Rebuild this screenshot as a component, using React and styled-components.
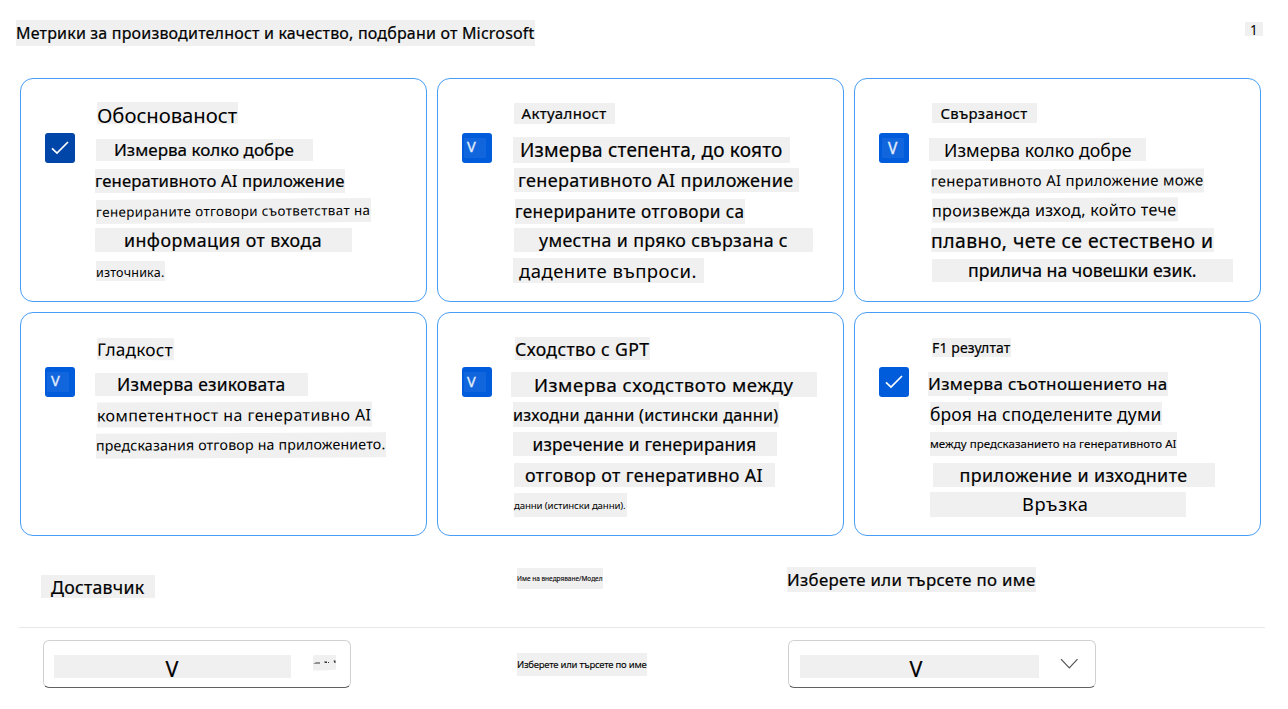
import React, { useLayoutEffect, useRef, useState } from "react";
import styled, { createGlobalStyle } from "styled-components";

const Global = createGlobalStyle`
  * { box-sizing: border-box; }
  body { margin: 0; background: #fff; color: #000; font-family: "Noto Sans", "Open Sans", sans-serif; }
`;

const Page = styled.main`
  width: 1288px;
  height: 709px;
  overflow: hidden;
  display: flex;
  flex-direction: column;
`;

const Header = styled.header`
  display: flex;
  justify-content: space-between;
  align-items: flex-start;
  height: 78px;
  padding: 20px 25px 0 16px;
`;

const Grid = styled.section`
  display: grid;
  grid-template-columns: repeat(3, 407px);
  grid-auto-rows: 224px;
  gap: 10px;
  padding-left: 20px;
`;

const Card = styled.article`
  display: flex;
  align-items: flex-start;
  gap: 19px;
  padding: 23px 0 0 24px;
  border: 1px solid #479ef5;
  border-radius: 13px;
`;

const CheckBox = styled.span`
  flex: none;
  display: flex;
  width: 30px;
  height: 30px;
  margin-top: 31px;
  border-radius: 3px;
  background: ${(p) => (p.$dark ? "#0046a8" : "#005cdb")};
  color: #fff;
`;

const CheckPatch = styled.span`
  width: 22px;
  height: 20px;
  margin: ${(p) => p.$top}px 0 0 ${(p) => p.$left}px;
  padding-left: ${(p) => p.$inset}px;
  background: #1166de;
  color: #e4eefb;
  -webkit-text-stroke: 0.3px #e4eefb;
  font-size: ${(p) => p.$size}px;
  line-height: ${(p) => p.$line}px;
`;

const Body = styled.div`
  flex: 1;
  min-width: 0;
`;

const Strip = styled.div`
  flex: none;
  width: ${(p) => p.$w}px;
  height: ${(p) => p.$h}px;
  margin: ${(p) => p.$gap || 0}px 0 0 ${(p) => p.$x || 0}px;
  padding-left: ${(p) => (p.$inset ? p.$inset + 0.5 : 0)}px;
  background: #f0f0f0;
  white-space: nowrap;
  font-size: ${(p) => p.$size}px;
  line-height: ${(p) => 2 * (p.$base + 0.5 - 0.388 * p.$size)}px;
  -webkit-text-stroke: ${(p) => (p.$light ? 0 : p.$size > 12 ? 0.2 : 0.1)}px #000;
  transform: ${(p) => (p.$tilt ? `rotate(${p.$tilt}deg)` : "none")};
`;

const Label = styled.span`
  display: inline-block;
  line-height: inherit;
  vertical-align: top;
`;

/* Tracks its text so that the run fills the given width. */
function Line({ text, fit, ...strip }) {
  const ref = useRef(null);
  const [spacing, setSpacing] = useState(0);
  useLayoutEffect(() => {
    if (fit) setSpacing((fit - 0.5 - ref.current.getBoundingClientRect().width) / text.length);
  }, [fit, text]);
  return (
    <Strip {...strip}>
      <Label ref={ref} style={{ letterSpacing: spacing }}>{text}</Label>
    </Strip>
  );
}

const line = (text, $gap, $x, $w, $h, $inset, fit, $size, $base, $tilt, $light) => ({
  text, $gap, $x, $w, $h, $inset, fit, $size, $base, $tilt, $light,
});

const cards = [
  {
    check: "dark",
    lines: [
      line("Обоснованост", 0, 3, 141, 22, 0, 140.5, 20.3, 21, 0, true),
      line("Измерва колко добре", 15, 2, 217, 22, 17.5, 180.5, 17, 17),
      line("генеративното AI приложение", 8, 1, 250, 24, 0, 250, 16.7, 18),
      line("генерираните отговори съответстват на", 6, 2, 275, 24, 0, 275, 13.4, 17.5, -0.4, true),
      line("информация от входа", 5, 1, 257, 24, 28.5, 198.5, 17.8, 18.5),
      line("източника.", 9, 2, 69, 20, 0, 69, 12.5, 16, 0, true),
    ],
  },
  {
    check: { $top: 5, $left: 2, $inset: 3, $size: 14.5, $line: 17 },
    lines: [
      line("Актуалност", 1, 3, 101, 21, 7, 85.5, 15, 15.5),
      line("Измерва степента, до която", 13, 2, 277, 26, 6.5, 263, 19, 20.3),
      line("генеративното AI приложение", 5, 3, 285, 24, 3.5, 276, 18, 18.5),
      line("генерираните отговори са", 7, 4, 230, 25, 0, 230, 17.2, 19),
      line("уместна и пряко свързана с", 4, 3, 299, 24, 24.5, 249.5, 17.8, 18.5),
      line("дадените въпроси.", 6, 2, 191, 25, 5.5, 178.5, 18.5, 19.5, 0, true),
    ],
  },
  {
    check: { $top: 5, $left: 3, $inset: 6, $size: 15.5, $line: 21 },
    lines: [
      line("Свързаност", 1, 4, 105, 20, 8, 87.5, 14.9, 15.5),
      line("Измерва колко добре", 15, 1, 217, 23, 14.5, 188, 17.7, 18.5, 0, true),
      line("генеративното AI приложение може", 7.5, 3, 273, 24, 0, 273, 14.9, 17.2, -0.25, true),
      line("произвежда изход, който тече", 5.5, 4, 246, 24, 0, 245, 16.2, 18.5, -0.3, true),
      line("плавно, чете се естествено и", 6, 3, 283, 24, 0, 283, 19.4, 20.5),
      line("прилича на човешки език.", 7, 4, 301, 23, 35.5, 229, 17.7, 18),
    ],
  },
  {
    check: { $top: 5, $left: 2, $inset: 4, $size: 14.5, $line: 17 },
    lines: [
      line("Гладкост", 2, 3, 77, 22, 0, 76.5, 17.2, 18.5, 0.5, true),
      line("Измерва езиковата", 13, 1, 213, 23, 21.5, 169, 17.5, 18),
      line("компетентност на генеративно AI", 6, 3, 275, 25, 0, 275, 16, 18.8, -0.2, true),
      line("предсказания отговор на приложението.", 6, 2, 290, 25, 0, 290, 14.2, 17.5, -0.3, true),
    ],
  },
  {
    check: { $top: 5, $left: 2, $inset: 3, $size: 14.5, $line: 19 },
    lines: [
      line("Сходство с GPT", 1, 4, 135, 23, 0, 135, 17.6, 19),
      line("Измерва сходството между", 12, 0, 306, 25, 22.5, 260, 18.6, 19.8),
      line("изходни данни (истински данни)", 5, 2, 266, 25, 0, 266, 16.2, 19),
      line("изречение и генерирания", 5, 2, 264, 24, 19, 224.5, 17.3, 19.3),
      line("отговор от генеративно AI", 7, 3, 261, 24, 10.5, 238.5, 17.9, 18.5),
      line("данни (истински данни).", 6, 3, 113, 24, 0, 112, 9.7, 16, 0, true),
    ],
  },
  {
    check: "plain",
    lines: [
      line("F1 резултат", 2, 4, 79, 19, 0, 79, 14, 14.5),
      line("Измерва съотношението на", 15, 0, 240, 24, 0, 240, 17, 18),
      line("броя на споделените думи", 6, 2, 232, 23, 0, 232, 17.5, 18.5, 0, true),
      line("между предсказанието на генеративното AI", 7, 2, 247, 24, 0, 247, 11.5, 16),
      line("приложение и изходните", 7, 5, 282, 24, 26, 228.5, 17.9, 18.5),
      line("Връзка", 5, 2, 256, 25, 91.5, 67, 18.3, 18.5, 0, true),
    ],
  },
];

const CheckMark = styled.svg`
  width: 30px;
  height: 30px;
  fill: none;
  stroke: #fff;
  stroke-width: 1.7;
`;

function Check({ kind }) {
  if (typeof kind === "string") {
    return (
      <CheckBox $dark={kind === "dark"}>
        <CheckMark viewBox="0 0 30 30">
          <path d="M7 15.3 12 20 23 9" />
        </CheckMark>
      </CheckBox>
    );
  }
  return (
    <CheckBox>
      <CheckPatch {...kind}>V</CheckPatch>
    </CheckBox>
  );
}

const Columns = styled.section`
  display: grid;
  grid-template-columns: 473px 271px 1fr;
  align-items: start;
  height: 92px;
  margin: 0 23px 0 19px;
  padding: 31px 0 0 22px;
  border-bottom: 1px solid #e8e8e8;
`;

const Fields = styled.section`
  display: grid;
  grid-template-columns: 473px 272px 308px;
  align-items: start;
  padding: 12px 0 0 43px;
`;

const Select = styled.div`
  display: flex;
  align-items: flex-start;
  width: 308px;
  height: 48px;
  padding: 14px 0 0 ${(p) => p.$pad}px;
  border: 1px solid #d1d1d1;
  border-bottom-color: #616161;
  border-radius: 6px;
`;

const Dots = styled.svg`
  width: 24px;
  height: 16px;
  margin-left: 22px;
`;

const Chevron = styled.svg`
  width: 18px;
  height: 11px;
  margin: 3px 0 0 21px;
  fill: none;
  stroke: #555;
  stroke-width: 1.2;
`;

export default function App() {
  return (
    <Page>
      <Global />
      <Header>
        <Line text="Метрики за производителност и качество, подбрани от Microsoft" $w={519} $h={26} fit={519} $size={16} $base={19.5} />
        <Line text="1" $gap={2} $w={18} $h={14} $inset={4.5} $size={13.5} $base={13} $light />
      </Header>
      <Grid>
        {cards.map((card) => (
          <Card key={card.lines[0].text}>
            <Check kind={card.check} />
            <Body>
              {card.lines.map((l) => (
                <Line key={l.text} {...l} />
              ))}
            </Body>
          </Card>
        ))}
      </Grid>
      <Columns>
        <Line text="Доставчик" $gap={8} $w={114} $h={23} $inset={9.5} fit={94} $size={17.7} $base={18.5} />
        <Line text="Име на внедряване/Модел" $gap={1} $x={3} $w={86} $h={21} fit={86} $size={6.5} $base={13} />
        <Line text="Изберете или търсете по име" $x={2} $w={249} $h={25} fit={249} $size={16.8} $base={19.3} />
      </Columns>
      <Fields>
        <Select $pad={10}>
          <Strip $w={237} $h={23} $inset={111} $size={21.5} $base={21.5}>V</Strip>
          <Dots viewBox="0 0 24 16">
            <path d="M1 0H23V14.5L12 15.5H0V2Z" fill="#f0f0f0" />
            <path d="M0 8.5 3 7.5H7V8.5H3ZM11 6.5H14V8H12ZM15 7H16V8H15ZM20.5 5.5H22.5V8H21.5Z" fill="#333" />
          </Dots>
        </Select>
        <Line text="Изберете или търсете по име" $gap={13} $x={1} $w={130} $h={23} fit={130} $size={9.5} $base={15} />
        <Select $pad={11}>
          <Strip $w={239} $h={23} $inset={109} $size={21.5} $base={21.5}>V</Strip>
          <Chevron viewBox="0 0 18 11">
            <path d="M1 1.2 9.3 9.8 17.5 1.2" />
          </Chevron>
        </Select>
      </Fields>
    </Page>
  );
}
